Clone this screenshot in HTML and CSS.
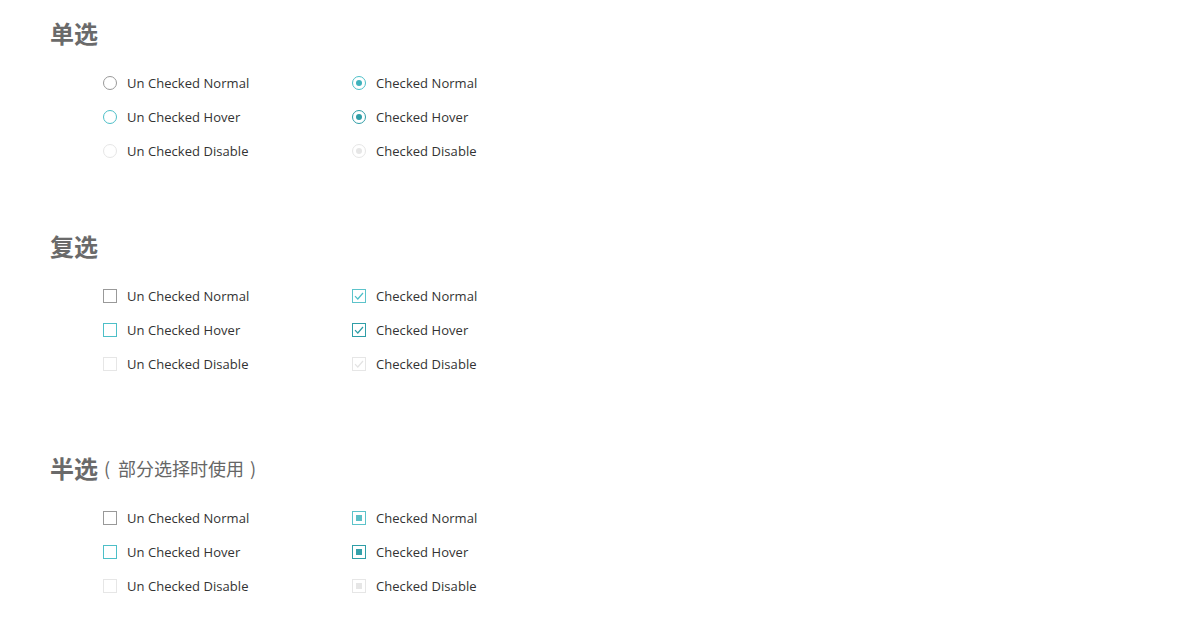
FILE: index.html
```html
<!DOCTYPE html>
<html lang="zh">
<head>
<meta charset="utf-8">
<title>选择控件</title>
<link rel="stylesheet" href="styles.css">
</head>
<body>
<div class="page">
  <section class="group">
    <h2 class="title">单选</h2>
    <div class="grid">
      <div class="item"><span class="radio"></span><span class="label">Un Checked Normal</span></div>
      <div class="item"><span class="radio radio--checked"></span><span class="label">Checked Normal</span></div>
      <div class="item"><span class="radio radio--hover"></span><span class="label">Un Checked Hover</span></div>
      <div class="item"><span class="radio radio--checked-hover"></span><span class="label">Checked Hover</span></div>
      <div class="item"><span class="radio radio--disabled"></span><span class="label">Un Checked Disable</span></div>
      <div class="item"><span class="radio radio--checked-disabled"></span><span class="label">Checked Disable</span></div>
    </div>
  </section>

  <section class="group group--second">
    <h2 class="title">复选</h2>
    <div class="grid">
      <div class="item"><span class="box"></span><span class="label">Un Checked Normal</span></div>
      <div class="item"><span class="box box--checked"><svg viewBox="0 0 14 14" class="tick"><path d="M3 7.2 L5.8 10 L11 4"/></svg></span><span class="label">Checked Normal</span></div>
      <div class="item"><span class="box box--hover"></span><span class="label">Un Checked Hover</span></div>
      <div class="item"><span class="box box--checked-hover"><svg viewBox="0 0 14 14" class="tick"><path d="M3 7.2 L5.8 10 L11 4"/></svg></span><span class="label">Checked Hover</span></div>
      <div class="item"><span class="box box--disabled"></span><span class="label">Un Checked Disable</span></div>
      <div class="item"><span class="box box--checked-disabled"><svg viewBox="0 0 14 14" class="tick"><path d="M3 7.2 L5.8 10 L11 4"/></svg></span><span class="label">Checked Disable</span></div>
    </div>
  </section>

  <section class="group group--third">
    <h2 class="title">半选<span class="title-note"><span class="paren paren--open">(</span>部分选择时使用<span class="paren paren--close">)</span></span></h2>
    <div class="grid">
      <div class="item"><span class="box"></span><span class="label">Un Checked Normal</span></div>
      <div class="item"><span class="box box--half"></span><span class="label">Checked Normal</span></div>
      <div class="item"><span class="box box--hover"></span><span class="label">Un Checked Hover</span></div>
      <div class="item"><span class="box box--half-hover"></span><span class="label">Checked Hover</span></div>
      <div class="item"><span class="box box--disabled"></span><span class="label">Un Checked Disable</span></div>
      <div class="item"><span class="box box--half-disabled"></span><span class="label">Checked Disable</span></div>
    </div>
  </section>
</div>
</body>
</html>
```

FILE: styles.css
```css
html, body {
  margin: 0;
  padding: 0;
  background: #ffffff;
}

.page {
  padding: 17px 0 0 50px;
  font-family: "Open Sans", "Noto Sans", "Noto Sans CJK SC", sans-serif;
  color: #333333;
}

.group--second {
  margin-top: 62px;
}

.group--third {
  margin-top: 71px;
}

.title {
  margin: 0;
  height: 32px;
  line-height: 32px;
  font-family: "Noto Sans CJK SC", sans-serif;
  font-size: 24px;
  font-weight: 700;
  color: #6a6a6a;
  display: flex;
  align-items: center;
}

.title-note {
  font-size: 18px;
  line-height: 32px;
  font-weight: 400;
  color: #666666;
  margin-left: 6px;
}

.paren--open {
  margin-right: 8px;
}

.paren--close {
  margin-left: 6px;
}

.grid {
  margin-top: 17px;
  padding-left: 53px;
  display: grid;
  grid-template-columns: 249px 249px;
  grid-auto-rows: 34px;
}

.item {
  display: flex;
  align-items: center;
  gap: 10px;
}

.label {
  font-size: 13px;
  color: #333333;
  letter-spacing: 0.05px;
  white-space: nowrap;
}

/* radio */
.radio {
  width: 14px;
  height: 14px;
  box-sizing: border-box;
  border-radius: 50%;
  border: 1px solid #999999;
  background: #fff;
  display: flex;
  align-items: center;
  justify-content: center;
  flex: none;
}

.radio--hover {
  border-color: #4dbfc8;
}

.radio--disabled {
  border-color: #e6e6e6;
}

.radio--checked,
.radio--checked-hover,
.radio--checked-disabled {
  border-color: #4dbfc8;
}

.radio--checked::after,
.radio--checked-hover::after,
.radio--checked-disabled::after {
  content: "";
  width: 6px;
  height: 6px;
  border-radius: 50%;
  background: #3fb2bc;
}

.radio--checked-hover {
  border-color: #2f9ea7;
}

.radio--checked-hover::after {
  background: #2f9ea7;
}

.radio--checked-disabled {
  border-color: #e6e6e6;
}

.radio--checked-disabled::after {
  background: #e6e6e6;
}

/* checkbox */
.box {
  width: 14px;
  height: 14px;
  box-sizing: border-box;
  border: 1px solid #999999;
  background: #fff;
  display: flex;
  align-items: center;
  justify-content: center;
  flex: none;
}

.box--hover {
  border-color: #4dbfc8;
}

.box--disabled {
  border-color: #e6e6e6;
}

.box--checked {
  border-color: #5cc3ca;
}

.box--checked-hover {
  border-color: #2f9ea7;
}

.box--checked-disabled {
  border-color: #e6e6e6;
}

.tick {
  width: 14px;
  height: 14px;
  margin: -1px;
  fill: none;
  stroke-width: 1.2;
}

.box--checked .tick {
  stroke: #4dbfc8;
}

.box--checked-hover .tick {
  stroke: #2f9ea7;
}

.box--checked-disabled .tick {
  stroke: #e3e3e3;
}

.box--half,
.box--half-hover,
.box--half-disabled {
  border-color: #5cc3ca;
}

.box--half::after,
.box--half-hover::after,
.box--half-disabled::after {
  content: "";
  width: 6px;
  height: 6px;
  background: #5bbfc6;
}

.box--half-hover {
  border-color: #2f9ea7;
}

.box--half-hover::after {
  background: #35a1aa;
}

.box--half-disabled {
  border-color: #e6e6e6;
}

.box--half-disabled::after {
  background: #e6e6e6;
}
```
